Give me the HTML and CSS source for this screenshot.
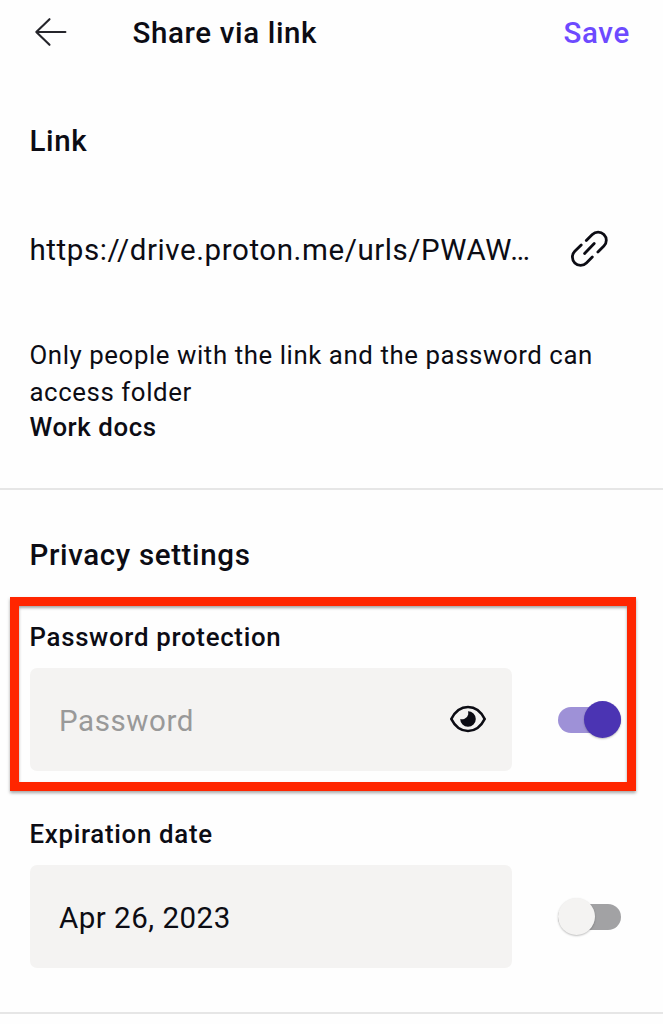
FILE: index.html
```html
<!DOCTYPE html>
<html lang="en">
<head>
<meta charset="utf-8">
<title>Share via link</title>
<link rel="stylesheet" href="styles.css">
</head>
<body>
<header class="topbar">
  <svg class="back" width="34" height="30" viewBox="0 0 34 30"><path d="M16.5 2.2 3.3 15 16.5 27.8M3.3 15H32.4"/></svg>
  <h1 class="title">Share via link</h1>
  <span class="save">Save</span>
</header>
<section class="link-section">
  <h2 class="heading">Link</h2>
  <div class="url-row">
    <span class="url">https://drive.proton.me/urls/PWAW…</span>
    <svg class="link-icon" width="40" height="40" viewBox="0 0 40 40"><path d="M17.3 12.5 23.3 6.5A8.2 8.2 0 0 1 34.9 18.1L28.9 24.1M12.2 16.9 5.8 23.3A8.2 8.2 0 0 0 17.4 34.9L23.3 29M15.6 25.5 25.2 15.5"/></svg>
  </div>
  <p class="note">Only people with the link and the password can<br>access folder</p>
  <p class="folder">Work docs</p>
</section>
<section class="privacy">
  <h2 class="heading">Privacy settings</h2>
  <div class="setting highlighted">
    <h3 class="label">Password protection</h3>
    <div class="control">
      <div class="field">
        <span class="placeholder">Password</span>
        <svg class="eye" width="38" height="30" viewBox="0 0 38 30"><path class="lid" d="M2.3 15C6.2 7.2 12.5 3 19 3S31.8 7.2 35.7 15C31.8 22.8 25.5 27 19 27S6.2 22.8 2.3 15Z"/><path class="iris" d="M19 7.2A7.8 7.8 0 1 1 11.2 15Q13 15.8 15.6 14.7 18.6 13.4 19.2 10.5 19.4 8.8 19 7.2Z"/></svg>
      </div>
      <div class="toggle on"><span class="thumb"></span></div>
    </div>
    <div class="marker"></div>
  </div>
  <div class="setting">
    <h3 class="label">Expiration date</h3>
    <div class="control">
      <div class="field"><span class="date">Apr 26, 2023</span></div>
      <div class="toggle"><span class="thumb"></span></div>
    </div>
  </div>
</section>
</body>
</html>
```

FILE: styles.css
```css
* { box-sizing: border-box; }
body {
  margin: 0;
  height: 1024px;
  overflow: hidden;
  background: #fefefe;
  color: #0c0c14;
  font-family: Roboto, sans-serif;
  font-size: 29.5px;
  letter-spacing: 0.58px;
}
h1, h2, h3, p { margin: 0; }
h1, h2, h3 { font-weight: 500; font-size: inherit; }
svg { display: block; fill: none; flex: none; }
.topbar {
  display: flex;
  align-items: center;
  height: 65px;
  padding: 0 33px 0 33px;
}
.back { margin-top: -1px; stroke: #25252b; stroke-width: 2.1; stroke-linecap: round; stroke-linejoin: round; }
.title { flex: 1; margin-left: 65.5px; letter-spacing: 0.64px; }
.save { color: #6d4aff; font-weight: 500; letter-spacing: 0.7px; }
.link-section {
  height: 425px;
  padding: 58px 30px 0 29.5px;
  border-bottom: 2px solid #e6e6e6;
}
.heading { line-height: 36px; letter-spacing: 0.64px; }
.url-row {
  display: flex;
  align-items: center;
  justify-content: space-between;
  height: 40px;
  margin-top: 71px;
  padding-right: 24px;
}
.url { white-space: nowrap; }
.link-icon { margin-top: -4px; stroke: #0c0c14; stroke-width: 2.8; stroke-linecap: round; }
.note { margin-top: 67px; font-size: 25.8px; line-height: 37px; white-space: nowrap; }
.folder { margin-top: -1px; font-size: 25.8px; line-height: 35px; font-weight: 500; }
.privacy {
  height: 524px;
  padding: 47px 30px 0 29.5px;
  border-bottom: 2px solid #e6e6e6;
}
.setting { position: relative; margin-top: 48px; }
.setting.highlighted { margin-top: 49px; }
.label { font-size: 25.8px; line-height: 30px; letter-spacing: 0.71px; }
.control {
  display: flex;
  align-items: center;
  gap: 46px;
  margin-top: 16px;
  padding-left: 0.5px;
}
.field {
  display: flex;
  align-items: center;
  justify-content: space-between;
  width: 482px;
  height: 103px;
  padding: 2px 25px 0 29px;
  border-radius: 7px;
  background: #f4f3f2;
}
.placeholder { color: #999; }
.date { letter-spacing: 0.5px; }
.eye { margin-top: -2.4px; }
.lid { stroke: #0c0c14; stroke-width: 2.7; stroke-linejoin: round; }
.iris { fill: #0c0c14; }
.toggle {
  display: flex;
  align-items: center;
  width: 63px;
  height: 26px;
  border-radius: 13px;
  background: #a2a2a4;
}
.toggle.on { justify-content: flex-end; background: #9e91d7; }
.thumb {
  width: 37px;
  height: 37px;
  border-radius: 50%;
  background: #f4f3f2;
  box-shadow: 0 1px 2px rgba(0, 0, 0, .25);
}
.on .thumb { background: #4b34b3; }
.marker {
  position: absolute;
  left: -19.5px;
  top: -25px;
  width: 626px;
  height: 194px;
  border: 9px solid #ff2600;
  box-shadow: 0 2px 3px rgba(0, 0, 0, .35), inset 0 2px 3px rgba(0, 0, 0, .35);
}
```
